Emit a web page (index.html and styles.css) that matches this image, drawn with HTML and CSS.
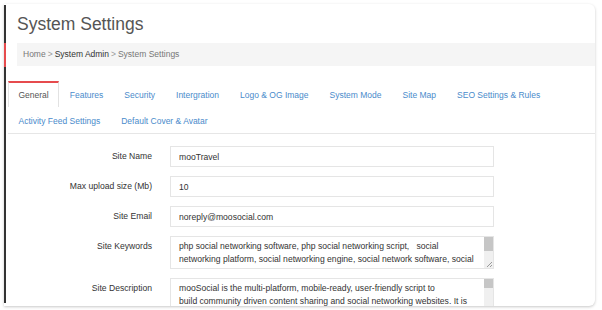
FILE: index.html
```html
<!DOCTYPE html>
<html lang="en">
<head>
<meta charset="utf-8">
<title>System Settings</title>
<link rel="stylesheet" href="styles.css">
</head>
<body>
<div class="card">
  <div class="edge"></div>
  <div class="main">
    <h1 class="title">System Settings</h1>
    <div class="crumbs">
      <a class="crumb">Home</a><span class="sep">&gt;</span><a class="crumb strong">System Admin</a><span class="sep">&gt;</span><span class="crumb">System Settings</span>
    </div>
    <ul class="tabs">
      <li class="tab active"><a>General</a></li>
      <li class="tab"><a>Features</a></li>
      <li class="tab"><a>Security</a></li>
      <li class="tab"><a>Intergration</a></li>
      <li class="tab"><a>Logo &amp; OG Image</a></li>
      <li class="tab"><a>System Mode</a></li>
      <li class="tab"><a>Site Map</a></li>
      <li class="tab"><a>SEO Settings &amp; Rules</a></li>
      <li class="tab"><a>Activity Feed Settings</a></li>
      <li class="tab"><a>Default Cover &amp; Avatar</a></li>
    </ul>
    <form class="form">
      <label class="label">Site Name</label>
      <input class="field" type="text" value="mooTravel">
      <label class="label">Max upload size (Mb)</label>
      <input class="field" type="text" value="10">
      <label class="label">Site Email</label>
      <input class="field" type="text" value="noreply@moosocial.com">
      <label class="label">Site Keywords</label>
      <div class="area-box area-kw">
        <textarea class="area">php social networking software, php social networking script,   social networking platform, social networking engine, social network software, social network script, social community software, community script, online community software, social network builder, social media platform</textarea>
        <div class="sbar"><div class="thumb thumb-kw"></div></div>
        <span class="grip"></span>
      </div>
      <label class="label">Site Description</label>
      <div class="area-box area-desc">
        <textarea class="area">mooSocial is the multi-platform, mobile-ready, user-friendly script to
build community driven content sharing and social networking websites. It is powered by a modern framework and ships with everything you need to launch your own social network: members, friends, groups, events, blogs, photos, videos, topics, activity feeds, notifications and much more.</textarea>
        <div class="sbar"><div class="thumb thumb-desc"></div></div>
      </div>
    </form>
  </div>
</div>
</body>
</html>
```

FILE: styles.css
```css
* { box-sizing: border-box; }

html, body {
  width: 602px;
  height: 310px;
  overflow: hidden;
}

body {
  margin: 0;
  padding: 4px 0 0 4px;
  background: #fff;
  font-family: "Liberation Sans", Arial, sans-serif;
  font-size: 8.6px;
  color: #333;
}

.card {
  width: 591px;
  height: 302px;
  display: flex;
  background: #fff;
  border-radius: 0 6px 6px 0;
  box-shadow: 0 1px 3px rgba(0, 0, 0, 0.22);
  overflow: hidden;
}

.edge {
  width: 2px;
  flex: none;
  background: linear-gradient(to bottom,
    transparent 0 1px,
    #333 1px 39px,
    #e64b4d 39px 63px,
    #333 63px 299px,
    transparent 299px);
}

.main {
  flex: 1;
  min-width: 0;
}

.title {
  margin: 0;
  padding: 9px 0 0 11px;
  font-size: 17.5px;
  line-height: 22px;
  font-weight: normal;
  color: #555;
}

.crumbs {
  margin: 8px 0 0 11px;
  height: 23px;
  line-height: 23px;
  padding-left: 6px;
  background: #f5f5f5;
  color: #777;
  font-size: 8.5px;
  white-space: nowrap;
}

.crumb { color: #777; }
.crumb.strong { color: #333; }
.sep { color: #999; padding: 0 2px; }

.tabs {
  list-style: none;
  margin: 15px 0 0 2px;
  padding: 0;
  display: flex;
  flex-wrap: wrap;
  border-bottom: 1px solid #e6e6e6;
  font-size: 8.5px;
}

.tab {
  padding: 6px 9.5px;
  line-height: 12px;
  border-top: 2px solid transparent;
  border-left: 1px solid transparent;
  border-right: 1px solid transparent;
  color: #4a8bcb;
  white-space: nowrap;
}

.tab.active {
  border-top-color: #e64b4d;
  border-left-color: #e2e2e2;
  border-right-color: #e2e2e2;
  color: #555;
}

.form {
  margin: 12px 0 0 0;
  display: grid;
  grid-template-columns: 146px 324px;
  column-gap: 18px;
  row-gap: 9px;
  align-items: start;
}

.label {
  text-align: right;
  line-height: 21px;
  color: #333;
}

.field {
  height: 21px;
  margin: 0;
  padding: 0 8px;
  border: 1px solid #e5e5e5;
  border-radius: 0;
  font-family: inherit;
  font-size: 8.6px;
  color: #333;
  outline: none;
}

.area-box {
  position: relative;
  display: flex;
  border: 1px solid #e5e5e5;
  background: #fff;
}

.area-kw { height: 33px; }
.area-desc { height: 80px; }

.area {
  flex: 1;
  min-width: 0;
  margin: 0;
  padding: 3px 2px 3px 8px;
  border: none;
  font-family: inherit;
  font-size: 8.6px;
  line-height: 13px;
  color: #333;
  resize: none;
  outline: none;
  overflow: hidden;
  background: transparent;
}

.sbar {
  width: 9px;
  flex: none;
  background: #f0f0f0;
}

.thumb {
  background: #c6c6c6;
}

.thumb-kw { height: 14px; }
.thumb-desc { height: 9px; }

.grip {
  position: absolute;
  right: 1px;
  bottom: 1px;
  width: 6px;
  height: 6px;
  background:
    linear-gradient(135deg, transparent 0 55%, #9a9a9a 55% 65%, transparent 65% 78%, #9a9a9a 78% 88%, transparent 88%);
}
```
